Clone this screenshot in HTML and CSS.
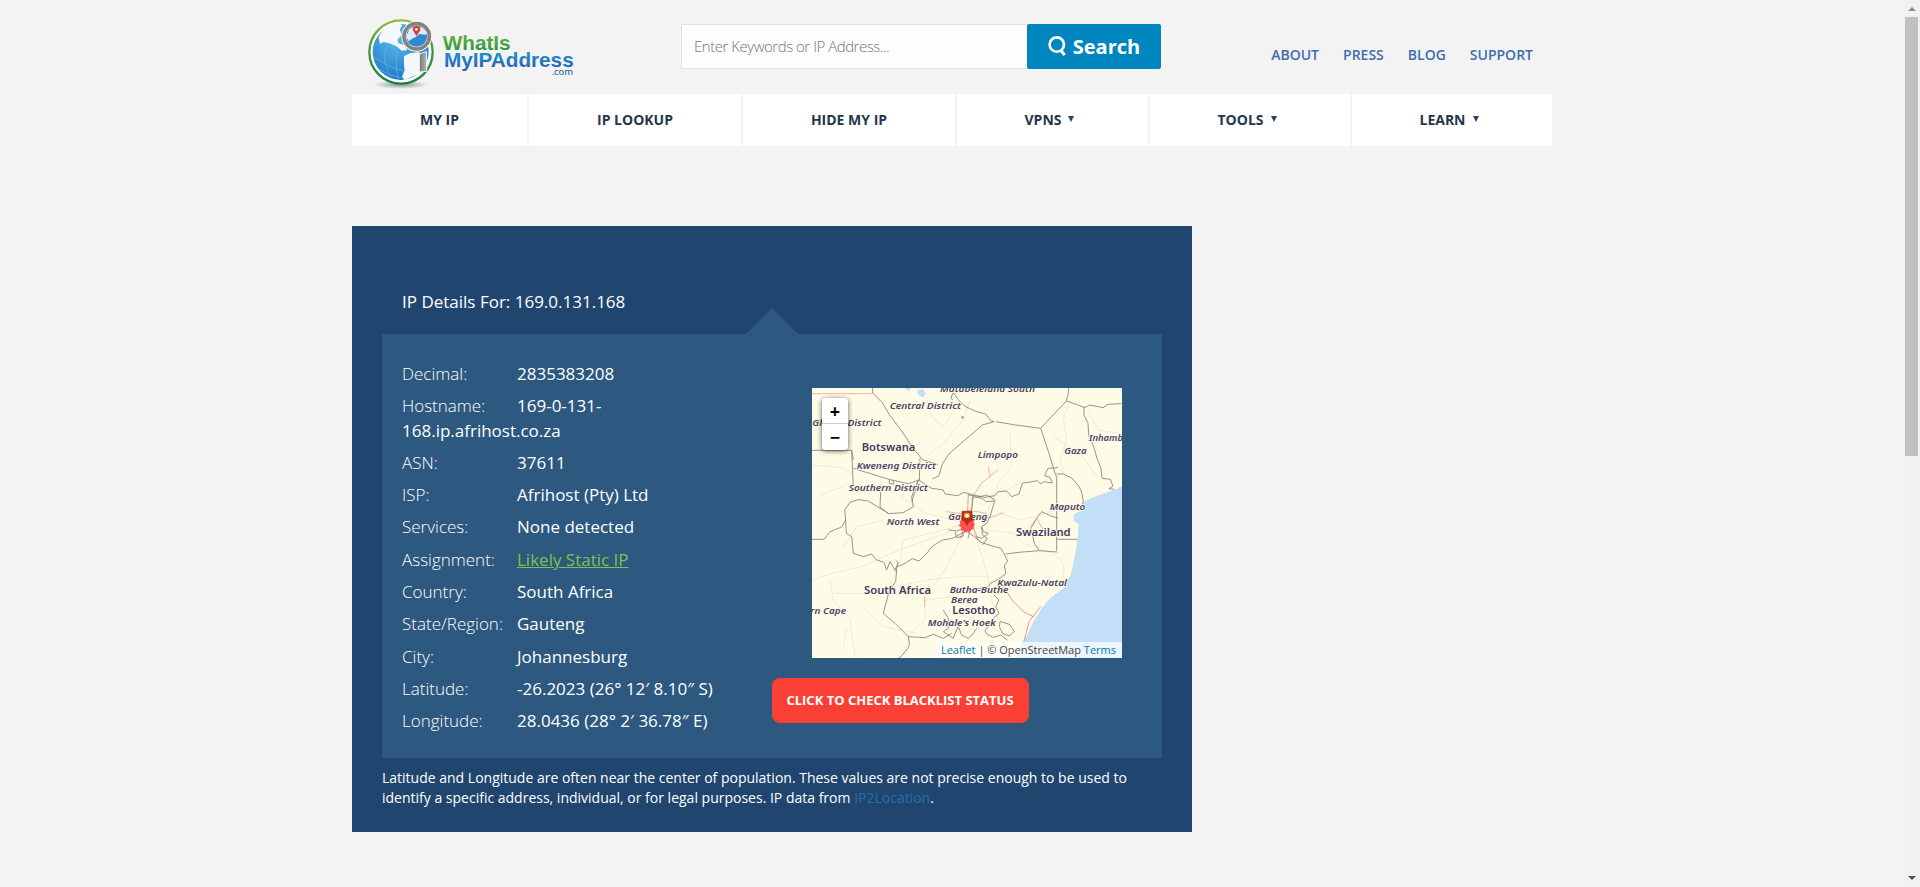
FILE: index.html
```html
<!DOCTYPE html>
<html lang="en">
<head>
<meta charset="utf-8">
<title>IP Details For: 169.0.131.168</title>
<link rel="stylesheet" href="styles.css">
</head>
<body>
<div class="container">
  <header class="header">
    <a class="logo" aria-label="WhatIsMyIPAddress.com">
      <svg width="240" height="94" viewBox="6 0 720 282">
        <defs>
          <linearGradient id="ring" x1="0" y1="0" x2="0" y2="1"><stop offset="0" stop-color="#9ab83c"/><stop offset=".4" stop-color="#4a9a3c"/><stop offset="1" stop-color="#15804a"/></linearGradient>
          <radialGradient id="sea" cx=".4" cy=".3" r=".8"><stop offset="0" stop-color="#58b7ea"/><stop offset="1" stop-color="#1673c0"/></radialGradient>
          <linearGradient id="green" x1="0" y1="0" x2="0" y2="1"><stop offset="0" stop-color="#79b83c"/><stop offset="1" stop-color="#1f9445"/></linearGradient>
          <linearGradient id="blue" x1="0" y1="0" x2="0" y2="1"><stop offset="0" stop-color="#1b9be0"/><stop offset="1" stop-color="#2360a9"/></linearGradient>
          <linearGradient id="metal"><stop offset="0" stop-color="#74777a"/><stop offset="1" stop-color="#b5b7b9"/></linearGradient>
          <radialGradient id="shade"><stop offset="0" stop-color="#8f9492"/><stop offset="1" stop-color="#f3f3f3"/></radialGradient>
        </defs>
        <ellipse cx="153" cy="254" rx="84" ry="13" fill="url(#shade)"/>
        <circle cx="153" cy="156" r="95" fill="#fff" stroke="url(#ring)" stroke-width="7"/>
        <circle cx="152" cy="156" r="84" fill="url(#sea)"/>
        <path d="M86 112l10-20 20-16 22-6 20 4-8 14 4 18-12 14 4 10 18 6 8 14-16 2-18-14-20-8-18-4-10 6z" fill="#f4f8fa"/>
        <path d="M162 168l18-8 26-4 14 12-2 50-26 10-28 12-8-10 8-20-2-14z" fill="#f4f8fa"/>
        <path d="M70 170Q110 200 160 212M84 206Q116 228 154 234M108 142Q94 184 122 230M142 156Q134 200 146 236" fill="none" stroke="#69b6e2" stroke-width="2"/>
        <circle cx="200" cy="109" r="39" fill="#2f8bd0" stroke="#f7f7f7" stroke-width="15"/>
        <circle cx="200" cy="109" r="38" fill="none" stroke="#85827f" stroke-width="11"/>
        <path d="M168 110l10-22 20-10 20 6 14 14-6 6-18-2-12 10-10 4-10 8z" fill="#dfeef6"/>
        <path d="M208 162l22-8v60l-22 2z" fill="url(#metal)" stroke="#f7f7f7" stroke-width="3"/>
        <path d="M199 108l-9-15a11 11 0 1 1 20-1z" fill="#d93a32"/><circle cx="199" cy="88" r="4" fill="#fff"/>
        <text class="brand" x="278" y="149" textLength="204" lengthAdjust="spacingAndGlyphs" fill="url(#green)">WhatIs</text>
        <text class="brand" x="282" y="200" textLength="389" lengthAdjust="spacingAndGlyphs" fill="url(#blue)">MyIPAddress</text>
        <text class="brand-com" x="605" y="224" textLength="64" lengthAdjust="spacingAndGlyphs">.com</text>
      </svg>
    </a>
    <form class="search">
      <input class="search-input" type="text" placeholder="Enter Keywords or IP Address...">
      <button class="search-button" type="button">
        <svg width="19" height="21" viewBox="0 0 19 21" fill="none" stroke="#fff"><circle cx="8.8" cy="8.6" r="7.2" stroke-width="2.6"/><path d="M12.4 14l4.3 5" stroke-width="3"/></svg>
        <span>Search</span>
      </button>
    </form>
    <nav class="top-links"><a>ABOUT</a><a>PRESS</a><a>BLOG</a><a>SUPPORT</a></nav>
  </header>
  <nav class="main-nav">
    <a>MY IP</a><a>IP LOOKUP</a><a>HIDE MY IP</a>
    <a class="has-menu">VPNS<i class="caret"></i></a><a class="has-menu">TOOLS<i class="caret"></i></a><a class="has-menu">LEARN<i class="caret"></i></a>
  </nav>
  <main class="panel">
    <h1 class="panel-title">IP Details For: 169.0.131.168</h1>
    <section class="details">
      <div class="info">
        <p><span>Decimal:</span>2835383208</p>
        <p><span>Hostname:</span>169-0-131-<wbr>168.ip.afrihost.co.za</p>
        <p><span>ASN:</span>37611</p>
        <p><span>ISP:</span>Afrihost (Pty) Ltd</p>
        <p><span>Services:</span>None detected</p>
        <p><span>Assignment:</span><a class="green-link">Likely Static IP</a></p>
        <p><span>Country:</span>South Africa</p>
        <p><span>State/Region:</span>Gauteng</p>
        <p><span>City:</span>Johannesburg</p>
        <p><span>Latitude:</span>-26.2023 (26° 12′ 8.10″ S)</p>
        <p><span>Longitude:</span>28.0436 (28° 2′ 36.78″ E)</p>
      </div>
      <div class="side">
        <div class="map">
          <svg class="map-canvas" width="310" height="270" viewBox="36 24 930 810">
            <rect x="36" y="24" width="930" height="810" fill="#fefbe6"/>
            <path d="M966 320L930 334 880 352 850 365 845 390 820 404 822 424 836 432 832 485 822 540 812 585 790 625 750 655 722 690 700 725 682 765 664 790 650 834H966Z" fill="#c3def7"/>
            <path d="M314 24h18l-4 10zM350 30l20-2 8 14-8 10-14-6z" fill="#c3def7"/>
            <g class="minor">
              <path d="M36 255l90 8 34 20M380 60l15 50 35 30 20-30 25-50M60 345l80-30M36 600l60-20 90-20 110-50 140-50 60-40"/>
              <path d="M90 600l10 60 50 60 15 110M100 640h130l60-20 90-20 100-10h90M500 440l-60 120-40 60-25 30M530 480l20 60 15 60 10 60 20 60M500 430l-120-30-80-50"/>
              <path d="M600 400l60 20 80-20 80-30M630 160l5 100-40 50-30 80M500 440l140 20 30 30 90 30 30 30v40M375 650v70l-45 40M680 300l-60 30-60 20M810 60l-20 60 10 60-20 60 10 40M865 90l30 60 60 10M510 60l-20 60-60 70-50 40M250 420l-80 20-40 60M300 550l10-70 120-30 70-20M760 170l80 50 50 70"/>
              <path d="M380 660l80-10 40 20 40 80-50 40-80 20M140 740l-10 60M190 680l60 60 100 20M440 690l120 40 60 40"/>
            </g>
            <path d="M36 41h182M504 430l10-50 10-40 20-30 50-40M565 260l5 30M500 390l60 10-10 30M440 395l60 8 70 10 40-15M690 440l20-25 20 35M520 460l20 25M374 650v30" fill="none" stroke="#f4b5a6" stroke-width="3"/>
            <path d="M610 620l30 45 30 30 32 16M722 680l-35 45-15 60M505 340l-4 100M500 440l-20 35M515 430l20 50" fill="none" stroke="#ee9694" stroke-width="3"/>
            <g class="border">
              <path d="M218 24v15l30 30 20 35 45 60 25 40 30 35 45 15M36 211h119l5 105M160 265l110 34 55 12 35-12M160 240l-5-29M268 300v10l12 3v-14M360 235l-2 65M355 300l-20 50 5 30-30 18-45 3-25-20 2-45M355 300l-10 35-10 30"/>
              <path d="M465 24l-5 15 15 20 20 20 32 15 30 8 15 20 10 3-35 10-25 22-30 25-45 40-20 30-10 35-20 10M587 125l60 10 75 10M722 145l77-82M722 145l24 72 15 50 9 25v220M799 63l5-18 2-21M799 63l30 10 25 10 15-8 40 8 15-10 40-2"/>
              <path d="M852 80l0 25 12 25 2 35 15 35 10 35 12 30 3 30 25 3 8 20-12 8 15 2M770 282l20 0 25 12 20 22 10 20 5 28-3 10M355 300l40 25 35 5 5 12 40 5 15-10 40 10 25 5 30-5 10-12 25-2 15 17 22-8 10-32 45-8 10 10 10-7 25 4-7-17-16-5 10-22 30-2"/>
              <path d="M36 478h36l18-23 35-14 12-22M137 420l-3-30 16-23 25-8 30 4 35 22 25 15M137 420l2 40 16 10 5 50 30 10 25-8 15 18 22 7 8 23 10-25 15 25 10-22-8-7"/>
              <path d="M295 560l20-10 22-14 20 7 25-25 16-20 30-18 30-5 40-22 25 17 20 17 30 10 30 8 10 18 10 20-10 15 5 23-25 18-20 10-12 15-38 2-20 5M290 570l-3 35-20 30-17 65 35 30 40 40 3 20-2 12-25 30-12 5"/>
              <path d="M295 550l-8 25M517 350v25l-5 35 5 30-8 15-5 20M505 345l35 5 20-5 25 15-15 50-10 20-15 10 2 25 15 10-15 20M517 350l30 5 10 10 25-2M545 440l5 15 15 5-20 15-15-5M445 450l25 3 15-5 5 20-20 5-5-18"/>
              <path d="M617 522l40-5 60-5 54 4M717 510l-14-20-10-45 20-35 12-15 30 14 20 5M770 478h62M430 690l15 25 0 30-15 10 30 20 5-15 10-20 10 25 20 10 15-15 10-15M325 770l50 3 25-10 30 12 25-15M582 645l15 15-10 20 10 20-20 17-10 20-12 15 5 10 20 10 22-7 20 15M600 724l30 10 12 20-14 14-20-8-10-20z"/>
            </g>
            <path d="M458 40l-5 15 6 5M486 109l4 3-3 4z" stroke="#555" stroke-width="2" fill="none"/>
            <g class="region">
              <text x="420" y="35" textLength="285" lengthAdjust="spacingAndGlyphs">Matabeleland South</text>
              <text x="269" y="87" textLength="214" lengthAdjust="spacingAndGlyphs">Central District</text>
              <text x="37" y="137" textLength="207" lengthAdjust="spacingAndGlyphs">Ghanzi District</text>
              <text x="867" y="184" textLength="150" lengthAdjust="spacingAndGlyphs">Inhambane</text>
              <text x="533" y="235" textLength="121" lengthAdjust="spacingAndGlyphs">Limpopo</text>
              <text x="793" y="223" textLength="67" lengthAdjust="spacingAndGlyphs">Gaza</text>
              <text x="170" y="267" textLength="238" lengthAdjust="spacingAndGlyphs">Kweneng District</text>
              <text x="146" y="334" textLength="238" lengthAdjust="spacingAndGlyphs">Southern District</text>
              <text x="749" y="390" textLength="107" lengthAdjust="spacingAndGlyphs">Maputo</text>
              <text x="445" y="420" textLength="117" lengthAdjust="spacingAndGlyphs">Gauteng</text>
              <text x="260" y="434" textLength="158" lengthAdjust="spacingAndGlyphs">North West</text>
              <text x="592" y="617" textLength="209" lengthAdjust="spacingAndGlyphs">KwaZulu-Natal</text>
              <text x="449" y="640" textLength="176" lengthAdjust="spacingAndGlyphs">Butha-Buthe</text>
              <text x="453" y="669" textLength="80" lengthAdjust="spacingAndGlyphs">Berea</text>
              <text x="383" y="739" textLength="204" lengthAdjust="spacingAndGlyphs">Mohale's Hoek</text>
              <text x="-66" y="701" textLength="204" lengthAdjust="spacingAndGlyphs">Northern Cape</text>
            </g>
            <g class="country">
              <text x="185" y="212" textLength="161" lengthAdjust="spacingAndGlyphs">Botswana</text>
              <text x="648" y="469" textLength="164" lengthAdjust="spacingAndGlyphs">Swaziland</text>
              <text x="192" y="642" textLength="201" lengthAdjust="spacingAndGlyphs">South Africa</text>
              <text x="457" y="703" textLength="129" lengthAdjust="spacingAndGlyphs">Lesotho</text>
            </g>
            <path d="M501 406l6 6 8-3 2 8 7 3-3 7 4 7-5 6 1 7-8 2-4 8-7-3-8 4-4-7-8-1 1-8-7-5 5-7-2-8 8-2 1-8 7 1z" fill="#ff3b3b" fill-opacity=".88"/>
            <path d="M486 394h30v27h-6l-9 14-9-14h-6z" fill="#bd2b12" stroke="#8e2714" stroke-width="2"/>
            <rect x="492" y="398" width="18" height="16" rx="5" fill="#ed9638"/><circle cx="501" cy="407" r="5.5" fill="#fffbd6"/>
          </svg>
          <div class="zoom"><button type="button">+</button><button type="button">−</button></div>
          <div class="credit"><a>Leaflet</a> | © OpenStreetMap <a>Terms</a></div>
        </div>
        <button class="blacklist" type="button">CLICK TO CHECK BLACKLIST STATUS</button>
      </div>
    </section>
    <p class="note">Latitude and Longitude are often near the center of population. These values are not precise enough to be used to identify a specific address, individual, or for legal purposes. IP data from <a>IP2Location</a>.</p>
  </main>
</div>
<div class="scrollbar"><i class="arrow up"></i><div class="thumb"></div><i class="arrow down"></i></div>
</body>
</html>
```
FILE: styles.css
```css
* { box-sizing: border-box; }
body {
  margin: 0;
  height: 887px;
  overflow: hidden;
  background: #f3f3f3;
  font-family: "Open Sans", "Noto Sans", sans-serif;
  color: #fff;
}
p, h1 { margin: 0; }
button, input { font-family: inherit; }
.container { width: 1200px; margin-left: 352px; }

.header { display: flex; height: 94px; }
.logo { width: 329px; }
.logo svg { display: block; }
.brand { font: 700 63px "Liberation Sans", sans-serif; }
.brand-com { font: 26px "Open Sans", sans-serif; fill: #2d6cb0; stroke: #2d6cb0; stroke-width: .5; }
.search { display: flex; width: 480px; height: 45px; margin-top: 24px; }
.search-input {
  width: 346px;
  padding: 0 12px 2px;
  border: 1px solid #e3e3e3;
  border-right: 0;
  background: #fdfdfd;
  font-size: 15px;
  font-weight: 300;
  letter-spacing: -0.48px;
}
.search-input::placeholder { color: #757575; opacity: 1; }
.search-button {
  display: flex;
  align-items: center;
  justify-content: center;
  gap: 6px;
  width: 134px;
  padding: 0 0 1px;
  border: 0;
  border-radius: 2px;
  background: #0086be;
  color: #fff;
  font-size: 20px;
  font-weight: 700;
}
.top-links { display: flex; flex: 1; justify-content: flex-end; gap: 24px; padding: 44px 19px 0 0; }
.top-links a { color: #3f6cae; font-size: 14px; font-weight: 600; line-height: 21px; }

.main-nav { display: grid; grid-template-columns: 177px 214px 214px 193px 202px 200px; height: 52px; background: #fff; }
.main-nav a {
  display: flex;
  align-items: center;
  justify-content: center;
  padding-bottom: 2px;
  border-right: 2px solid #f3f3f3;
  color: #24364b;
  font-size: 14px;
  font-weight: 700;
}
.main-nav .has-menu { padding-right: 6px; }
.main-nav a:last-child { border-right: 0; }
.caret { margin-left: 7px; border: 3px solid transparent; border-top: 6px solid #24466a; border-bottom: 0; }

.panel { width: 840px; height: 606px; margin-top: 80px; padding: 64px 30px 0; background: #20466f; }
.panel-title { height: 44px; padding-left: 20px; font-size: 17px; font-weight: 400; line-height: 24px; }
.details { position: relative; display: flex; height: 424px; padding: 28px 40px 0 20px; background: #2d587f; }
.details::before {
  content: "";
  position: absolute;
  left: 364px;
  top: -26px;
  border: 26px solid transparent;
  border-top: 0;
  border-bottom-color: #2d587f;
}
.info { width: 340px; font-size: 17px; line-height: 24.28px; }
.info p { margin-bottom: 8px; }
.info span { display: inline-block; width: 115px; font-weight: 300; }
.green-link { color: #7dc24f; text-decoration: underline; font-weight: 400; }
.side { flex: 1; padding: 26px 0 0 30px; }
.map { position: relative; width: 310px; height: 270px; margin-left: 40px; }
.map-canvas { display: block; }
.minor { fill: none; stroke: #f3e9da; stroke-width: 3; }
.border { fill: none; stroke: #85857d; stroke-width: 2.6; stroke-linejoin: round; }
.region text { font: italic 600 29px "Noto Sans", sans-serif; fill: #4b4368; stroke: #fefbe6; stroke-width: 4; paint-order: stroke; }
.country text { font: 600 31px "Noto Sans", sans-serif; fill: #40395b; stroke: #fefbe6; stroke-width: 4; paint-order: stroke; }
.zoom { position: absolute; left: 10px; top: 10px; width: 26px; border-radius: 4px; overflow: hidden; box-shadow: 0 1px 5px rgba(0, 0, 0, .65); }
.zoom button { display: block; width: 26px; height: 26px; padding: 0; border: 0; background: #fff; color: #000; font: 700 18px/24px "Open Sans", sans-serif; }
.zoom button:first-child { border-bottom: 1px solid #ccc; }
.credit { position: absolute; right: 0; bottom: 0; padding: 0 6px 0 5px; background: rgba(255, 255, 255, .7); color: #444; font-size: 11px; line-height: 16px; }
.credit a { color: #0078a8; }
.blacklist {
  display: block;
  width: 257px;
  height: 45px;
  margin-top: 20px;
  margin-left: 0;
  padding: 0 1px 2px 0;
  border: 0;
  border-radius: 8px;
  background: #fa4034;
  color: #fff;
  font-size: 13px;
  font-weight: 700;
}
.note { padding-top: 10px; font-size: 14px; line-height: 20px; }
.note a { color: #2a6ba8; }

.scrollbar { position: absolute; top: 0; right: 0; width: 17px; height: 887px; background: #f1f1f1; }
.thumb { width: 13px; height: 439px; margin: 17px 2px 0; background: #c1c1c1; }
.arrow { position: absolute; left: 5px; border: 4px solid transparent; }
.up { top: 7px; border-top: 0; border-bottom-color: #8b8b8b; }
.down { bottom: 7px; border-bottom: 0; border-top-color: #505050; }
```
